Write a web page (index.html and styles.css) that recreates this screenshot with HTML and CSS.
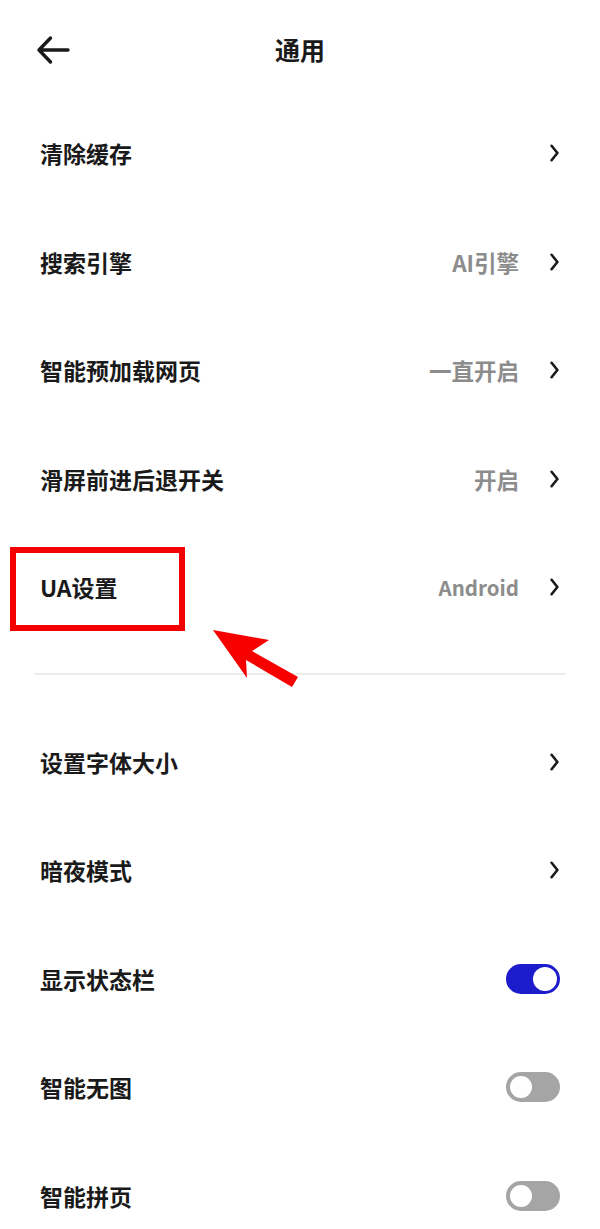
FILE: index.html
```html
<!DOCTYPE html>
<html lang="zh-CN">
<head>
  <meta charset="UTF-8" />
  <meta name="viewport" content="width=device-width, initial-scale=1.0"/>
  <title>通用</title>
  <link rel="stylesheet" href="styles.css">
</head>
<body>
  <div class="page">
    <header class="top-bar">
      <svg class="back" width="34" height="30" viewBox="0 0 34 30">
        <path d="M3 15 H32 M14.5 3 L3 15 L14.5 27" fill="none" stroke="#1a1a1a" stroke-width="3.4" stroke-linecap="round" stroke-linejoin="round"/>
      </svg>
      <h1>通用</h1>
    </header>

    <ul class="group">
      <li class="row"><span class="label">清除缓存</span><svg class="chev" width="9" height="18" viewBox="0 0 9 18"><path d="M1.6 1.8 L7.4 9 L1.6 16.2" fill="none" stroke="#1a1a1a" stroke-width="2.6" stroke-linecap="round" stroke-linejoin="round"/></svg></li>
      <li class="row"><span class="label">搜索引擎</span><span class="value">AI引擎</span><svg class="chev" width="9" height="18" viewBox="0 0 9 18"><path d="M1.6 1.8 L7.4 9 L1.6 16.2" fill="none" stroke="#1a1a1a" stroke-width="2.6" stroke-linecap="round" stroke-linejoin="round"/></svg></li>
      <li class="row"><span class="label">智能预加载网页</span><span class="value">一直开启</span><svg class="chev" width="9" height="18" viewBox="0 0 9 18"><path d="M1.6 1.8 L7.4 9 L1.6 16.2" fill="none" stroke="#1a1a1a" stroke-width="2.6" stroke-linecap="round" stroke-linejoin="round"/></svg></li>
      <li class="row"><span class="label">滑屏前进后退开关</span><span class="value">开启</span><svg class="chev" width="9" height="18" viewBox="0 0 9 18"><path d="M1.6 1.8 L7.4 9 L1.6 16.2" fill="none" stroke="#1a1a1a" stroke-width="2.6" stroke-linecap="round" stroke-linejoin="round"/></svg></li>
      <li class="row"><span class="label">UA设置</span><span class="value latin">Android</span><svg class="chev" width="9" height="18" viewBox="0 0 9 18"><path d="M1.6 1.8 L7.4 9 L1.6 16.2" fill="none" stroke="#1a1a1a" stroke-width="2.6" stroke-linecap="round" stroke-linejoin="round"/></svg></li>
    </ul>

    <div class="divider"></div>

    <ul class="group">
      <li class="row"><span class="label">设置字体大小</span><svg class="chev" width="9" height="18" viewBox="0 0 9 18"><path d="M1.6 1.8 L7.4 9 L1.6 16.2" fill="none" stroke="#1a1a1a" stroke-width="2.6" stroke-linecap="round" stroke-linejoin="round"/></svg></li>
      <li class="row"><span class="label">暗夜模式</span><svg class="chev" width="9" height="18" viewBox="0 0 9 18"><path d="M1.6 1.8 L7.4 9 L1.6 16.2" fill="none" stroke="#1a1a1a" stroke-width="2.6" stroke-linecap="round" stroke-linejoin="round"/></svg></li>
      <li class="row"><span class="label">显示状态栏</span><span class="switch on"></span></li>
      <li class="row"><span class="label">智能无图</span><span class="switch"></span></li>
      <li class="row"><span class="label">智能拼页</span><span class="switch"></span></li>
    </ul>

    <div class="mark-box"></div>
    <svg class="mark-arrow" width="600" height="1229" viewBox="0 0 600 1229">
      <polygon points="213,630 269,640 252,651 298,677 292,687 246,660 247,678" fill="#f60000"/>
    </svg>
  </div>
</body>
</html>
```

FILE: styles.css
```css
* {
  margin: 0;
  padding: 0;
  box-sizing: border-box;
}

body {
  font-family: "Noto Sans CJK SC", "Noto Sans", sans-serif;
  background: #fff;
  color: #1a1a1a;
}

.page {
  position: relative;
  width: 600px;
  min-height: 1229px;
  overflow: hidden;
}

.top-bar {
  position: relative;
  height: 99px;
  display: flex;
  align-items: center;
  justify-content: center;
}

.back {
  position: absolute;
  left: 36px;
  top: 35px;
}

.top-bar h1 {
  font-size: 25px;
  font-weight: 700;
  margin-bottom: 1px;
}

.group {
  list-style: none;
}

.row {
  height: 108.5px;
  display: flex;
  align-items: center;
  padding: 0 41px 0 40px;
}

.label {
  font-size: 23px;
  font-weight: 700;
  flex: 1;
}

.value {
  font-size: 22.5px;
  font-weight: 600;
  color: #8c8c8c;
  margin-right: 31px;
}

.value.latin {
  font-size: 20.5px;
}

.chev {
  display: block;
}

.divider {
  height: 2px;
  background: #ececec;
  margin: 31px 34px 33px 34px;
}

.switch {
  position: relative;
  width: 54px;
  height: 30px;
  border-radius: 15px;
  background: #a5a5a5;
  margin-right: -1px;
}

.switch::after {
  content: '';
  position: absolute;
  left: 4px;
  top: 4px;
  width: 22px;
  height: 22px;
  border-radius: 50%;
  background: #fff;
}

.switch.on {
  background: #1c1ccc;
}

.switch.on::after {
  left: auto;
  right: 3px;
  top: 3px;
  width: 24px;
  height: 24px;
}

.mark-box {
  position: absolute;
  left: 10px;
  top: 547px;
  width: 175px;
  height: 84px;
  border: 6.5px solid #f40000;
}

.mark-arrow {
  position: absolute;
  left: 0;
  top: 0;
  pointer-events: none;
}
```
